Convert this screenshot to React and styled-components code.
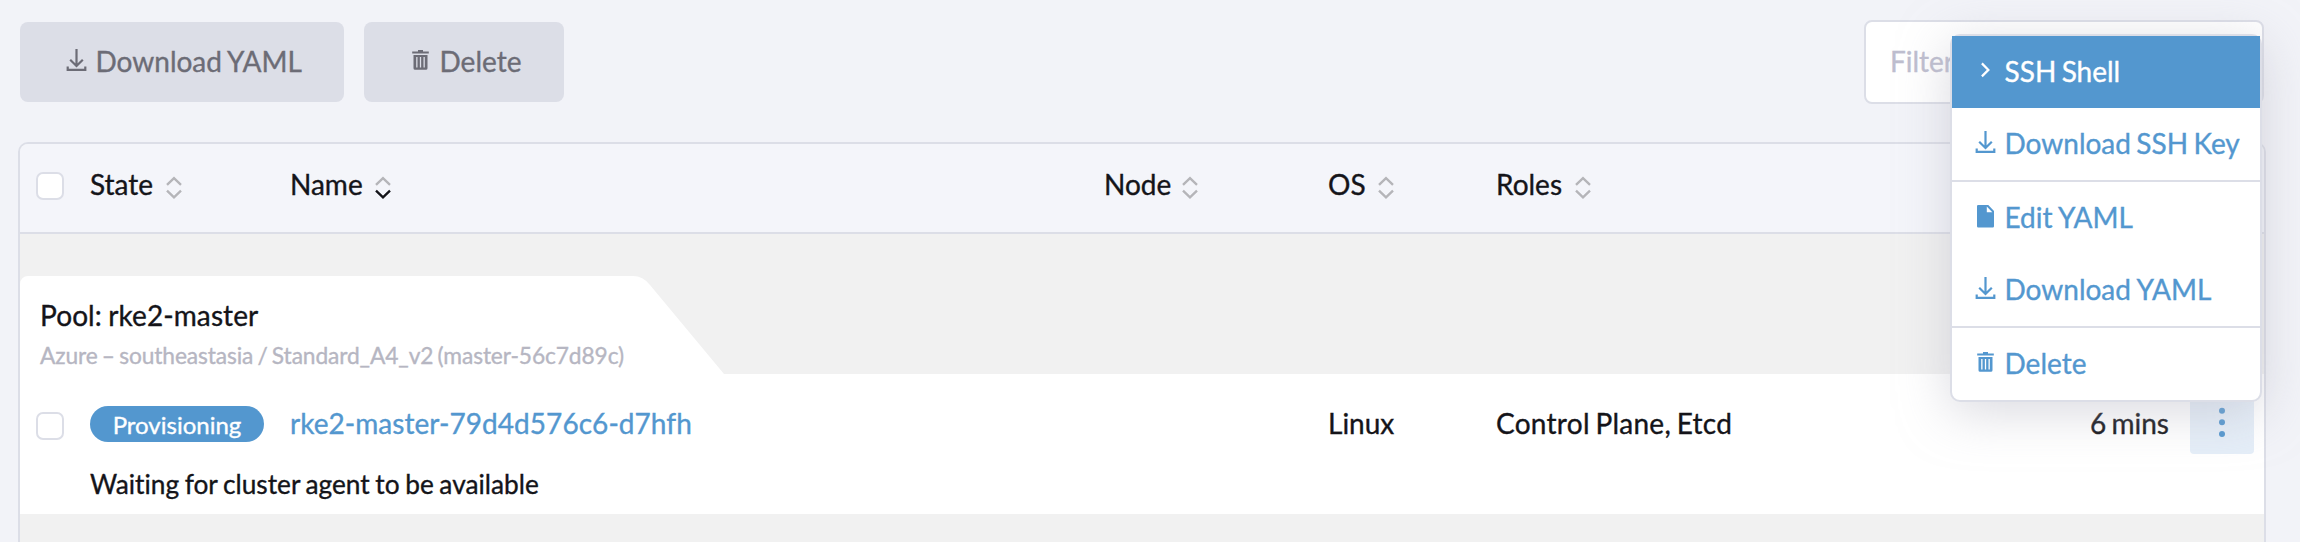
import React from "react";
import styled, { createGlobalStyle, css } from "styled-components";

const color = {
  page: "#f2f3f8",
  header: "#f4f5fa",
  border: "#dcdee7",
  text: "#141419",
  muted: "#b6b6c2",
  disabled: "#6c6c76",
  primary: "#5397cf",
  group: "#f1f1f1",
};

const Global = createGlobalStyle`
  * { box-sizing: border-box; }
  body {
    margin: 0;
    overflow: hidden;
    background: ${color.page};
    color: ${color.text};
    font-family: Lato, "Liberation Sans", sans-serif;
    font-size: 28px;
    line-height: 34px;
    word-spacing: -1.8px;
    font-variant-ligatures: none;
    -webkit-text-stroke: 0.35px currentColor;
  }
`;

const Page = styled.div`
  position: relative;
  width: 2300px;
  height: 542px;
  padding: 20px 34px 0 18px;
  overflow: hidden;
`;

const Toolbar = styled.div`
  display: flex;
  justify-content: space-between;
  height: 84px;
  padding: 0 2px;
  margin-bottom: 38px;
`;

const Actions = styled.div`
  display: flex;
  gap: 20px;
  padding-top: 2px;
`;

const Button = styled.button`
  display: flex;
  align-items: center;
  width: ${(p) => p.$width}px;
  height: 80px;
  padding: 0 0 2px 43px;
  border: 0;
  border-radius: 8px;
  background: ${color.border};
  color: ${color.disabled};
  font: inherit;
  word-spacing: -1px;
  white-space: nowrap;
`;

const Search = styled.div`
  width: 400px;
  height: 84px;
  padding: 22px 24px;
  border: 2px solid ${color.border};
  border-radius: 8px;
  background: #fff;
  color: #bebecf;
`;

const IconBox = styled.svg`
  flex: none;
  width: 28px;
  height: 28px;
  margin: 0 4.5px 2px 0;
`;

const Table = styled.div`
  width: 2248px;
  height: 420px;
  border: 2px solid ${color.border};
  border-radius: 10px 10px 0 0;
  background: ${color.group};
  overflow: hidden;
`;

const columns = css`
  display: grid;
  grid-template-columns: 70px 200px 814px 224px 168px 400px 1fr 95px;
`;

const HeaderRow = styled.div`
  ${columns}
  height: 90px;
  padding-top: 23px;
  border-bottom: 2px solid ${color.border};
  background: ${color.header};
`;

const HeaderCell = styled.div`
  display: flex;
  align-items: flex-start;
  gap: ${(p) => p.$gap}px;
`;

const SortIcon = styled.svg`
  width: 18px;
  height: 24px;
  margin-top: 9px;
`;

const Checkbox = styled.span`
  display: block;
  width: 28px;
  height: 28px;
  margin: ${(p) => p.$top}px 0 0 16px;
  border: 2px solid ${color.border};
  border-radius: 7px;
  background: #fff;
`;

const Group = styled.div`
  position: relative;
  height: 140px;
  padding-top: 42px;
`;

const TabShape = styled.svg`
  position: absolute;
  left: 0;
  top: 42px;
  width: 704px;
  height: 98px;
`;

const TabText = styled.div`
  position: relative;
  padding: 21px 0 0 20px;
`;

const Pool = styled.div`
  line-height: 36px;
  letter-spacing: 0.1px;
  word-spacing: -1px;
`;

const PoolDetail = styled.div`
  margin-top: 6px;
  color: ${color.muted};
  font-size: 22.75px;
  line-height: 34px;
  letter-spacing: -0.11px;
  word-spacing: -1.5px;
`;

const Row = styled.div`
  height: 140px;
  background: #fff;
`;

const Cells = styled.div`
  ${columns}
  height: 94px;
  padding-top: 16px;
`;

const Cell = styled.div`
  padding-top: 16px;
  text-align: ${(p) => (p.$right ? "right" : "left")};
  color: ${(p) => (p.$link ? color.primary : "inherit")};
  letter-spacing: ${(p) => p.$tracking || 0}px;
  white-space: nowrap;
`;

const Badge = styled.span`
  display: block;
  width: 174px;
  height: 36px;
  border-radius: 18px;
  background: ${color.primary};
  color: #fff;
  font-size: 24px;
  line-height: 38px;
  text-align: center;
`;

const MoreButton = styled.button`
  display: flex;
  align-items: center;
  justify-content: center;
  width: 64px;
  height: 64px;
  margin: 0 0 0 21px;
  padding: 0;
  border: 0;
  border-radius: 4px;
  background: #e5eef8;
`;

const Message = styled.div`
  padding-left: 70px;
  font-size: 26.25px;
  line-height: 32px;
  word-spacing: -1.1px;
`;

const Menu = styled.div`
  position: absolute;
  left: 1950px;
  top: 34px;
  width: 312px;
  border: 2px solid ${color.border};
  border-radius: 10px;
  background: #fff;
  box-shadow: 0 10px 50px rgba(182, 182, 194, 0.5);
`;

const MenuItem = styled.div`
  display: flex;
  align-items: center;
  height: 72px;
  padding: 0 0 2px 20px;
  background: ${(p) => (p.$active ? color.primary : "transparent")};
  color: ${(p) => (p.$active ? "#fff" : color.primary)};
  word-spacing: ${(p) => (p.$wide ? "-0.6px" : "inherit")};
  white-space: nowrap;
`;

const Divider = styled.div`
  height: 2px;
  background: ${color.border};
`;

function Icon({ name }) {
  return (
    <IconBox viewBox="0 0 28 28" fill="none" stroke="currentColor" strokeWidth="2.2">
      {name === "download" && (
        <path d="M13.5 3v17M7.2 13.7l6.3 6.3 6.3-6.3M4.7 20.6v3.3h17.6v-3.3" />
      )}
      {name === "trash" && (
        <g fill="currentColor" stroke="none">
          <path d="M11 4h5v1.4h5.8v2.2H5.2V5.4H11z" />
          <path
            fillRule="evenodd"
            d="M6.5 9h14v13.2a1.6 1.6 0 0 1-1.6 1.6H8.1a1.6 1.6 0 0 1-1.6-1.6zM9.2 11v10.5h1.3V11zM12.85 11v10.5h1.3V11zM16.5 11v10.5h1.3V11z"
          />
        </g>
      )}
      {name === "file" && (
        <path
          fill="currentColor"
          stroke="none"
          fillRule="evenodd"
          d="M6.1 3h10.2l5.7 6v15.3a1.2 1.2 0 0 1-1.2 1.2H6.2a1.2 1.2 0 0 1-1.2-1.2V4.2a1.2 1.2 0 0 1 1.1-1.2zM14.8 4.5v5.7h5.5z"
        />
      )}
      {name === "chevron" && <path d="M9.9 7.4l6.5 6.5-6.5 6.5" />}
    </IconBox>
  );
}

function Sort({ active }) {
  return (
    <SortIcon viewBox="0 0 18 24" fill="none" strokeWidth="2.4">
      <path d="M2 8.8l7-6.6 7 6.6" stroke="#b5b5b9" />
      <path d="M2 14.7l7 6.6 7-6.6" stroke={active ? color.text : "#b5b5b9"} />
    </SortIcon>
  );
}

function Header({ label, active, gap = 11 }) {
  return (
    <HeaderCell $gap={gap}>
      {label}
      <Sort active={active} />
    </HeaderCell>
  );
}

export default function App() {
  return (
    <Page>
      <Global />
      <Toolbar>
        <Actions>
          <Button $width={324}>
            <Icon name="download" />
            Download YAML
          </Button>
          <Button $width={200}>
            <Icon name="trash" />
            Delete
          </Button>
        </Actions>
        <Search>Filter</Search>
      </Toolbar>
      <Table>
        <HeaderRow>
          <Checkbox $top={5} />
          <Header label="State" gap={12} />
          <Header label="Name" active />
          <Header label="Node" gap={10} />
          <Header label="OS" />
          <Header label="Roles" gap={12} />
        </HeaderRow>
        <Group>
          <TabShape viewBox="0 0 704 98">
            <path fill="#fff" d="M0 98V8a8 8 0 0 1 8-8h605q10 0 17 9l74 89z" />
          </TabShape>
          <TabText>
            <Pool>Pool: rke2-master</Pool>
            <PoolDetail>Azure – southeastasia / Standard_A4_v2 (master-56c7d89c)</PoolDetail>
          </TabText>
        </Group>
        <Row>
          <Cells>
            <Checkbox $top={22} />
            <Cell>
              <Badge>Provisioning</Badge>
            </Cell>
            <Cell $link $tracking={0.05}>
              rke2-master-79d4d576c6-d7hfh
            </Cell>
            <Cell />
            <Cell>Linux</Cell>
            <Cell $tracking={0.27}>Control Plane, Etcd</Cell>
            <Cell $right>6 mins</Cell>
            <MoreButton>
              <svg width="8" height="32" viewBox="0 0 8 32" fill={color.primary}>
                <circle cx="4" cy="4.7" r="3" />
                <circle cx="4" cy="16.3" r="3" />
                <circle cx="4" cy="27.9" r="3" />
              </svg>
            </MoreButton>
          </Cells>
          <Message>Waiting for cluster agent to be available</Message>
        </Row>
      </Table>
      <Menu>
        <MenuItem $active>
          <Icon name="chevron" />
          SSH Shell
        </MenuItem>
        <MenuItem>
          <Icon name="download" />
          Download SSH Key
        </MenuItem>
        <Divider />
        <MenuItem $wide>
          <Icon name="file" />
          Edit YAML
        </MenuItem>
        <MenuItem $wide>
          <Icon name="download" />
          Download YAML
        </MenuItem>
        <Divider />
        <MenuItem>
          <Icon name="trash" />
          Delete
        </MenuItem>
      </Menu>
    </Page>
  );
}
